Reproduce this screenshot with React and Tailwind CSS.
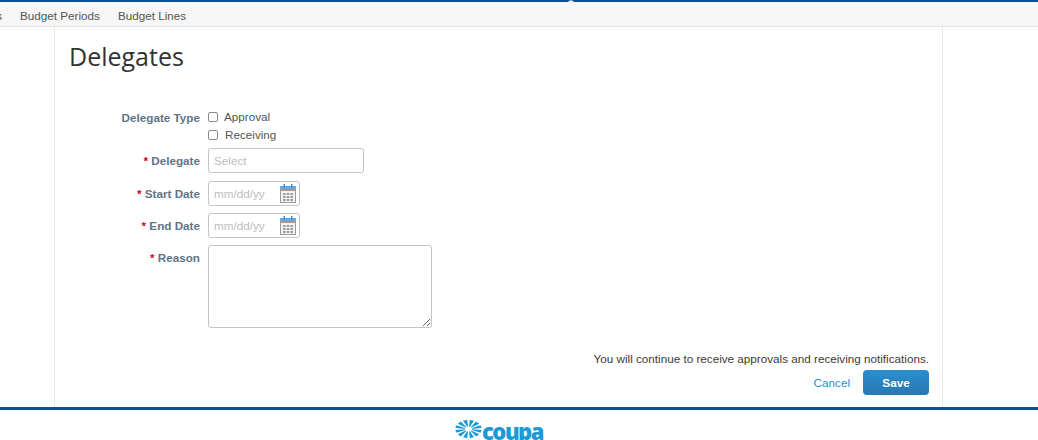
import React from "react";

const font = "font-['Liberation_Sans',Arial,sans-serif]";

const CalendarIcon = () => (
  <svg width="16" height="19" viewBox="0 0 16 19" className="block">
    <rect x="0" y="2" width="16" height="5" fill="#6aa6de" />
    <rect x="0.5" y="6.5" width="15" height="12" fill="#f4f4f4" stroke="#9c9c9c" />
    <rect x="3.5" y="0" width="1.5" height="4" fill="#7d7d7d" />
    <rect x="11" y="0" width="1.5" height="4" fill="#7d7d7d" />
    <g fill="#9a9a9a">
      <rect x="3" y="9" width="2.5" height="2" />
      <rect x="6.75" y="9" width="2.5" height="2" />
      <rect x="10.5" y="9" width="2.5" height="2" />
      <rect x="3" y="12" width="2.5" height="2" />
      <rect x="6.75" y="12" width="2.5" height="2" />
      <rect x="10.5" y="12" width="2.5" height="2" />
      <rect x="3" y="15" width="2.5" height="2" />
      <rect x="6.75" y="15" width="2.5" height="2" />
      <rect x="10.5" y="15" width="2.5" height="2" />
    </g>
  </svg>
);

const burstAngles = [0, 30, 60, 90, 120, 150, 180, 210, 240, 270, 300, 330];

const CoupaBurst = () => (
  <svg width="27" height="18" viewBox="-13.5 -9 27 18" className="block">
    <g fill="#1b9ad6" transform="scale(1.45 1)">
      {burstAngles.map((a) => (
        <polygon key={a} points="2.5,-0.3 9,-1.5 9,1.5 2.5,0.3" transform={`rotate(${a + 15})`} />
      ))}
    </g>
  </svg>
);

const Label = ({ required, children }) => (
  <div className="w-[131px] shrink-0 text-right text-[11.7px] font-bold leading-[14px] text-[#5f7488]">
    {required && <span className="text-[#d0021b]">* </span>}
    {children}
  </div>
);

const DateField = ({ label }) => (
  <div className="flex items-start gap-2">
    <div className="pt-[6px]">
      <Label required>{label}</Label>
    </div>
    <div className="flex h-[25px] w-[92px] items-center justify-between rounded-[3px] border border-[#c4c4c4] pl-[5px] pr-[3px]">
      <span className="text-[11.7px] text-[#bdbdbd]">mm/dd/yy</span>
      <CalendarIcon />
    </div>
  </div>
);

export default function App() {
  return (
    <div className={`${font} h-[440px] w-[1038px] overflow-hidden bg-white`}>
      <div className="relative h-[27px] border-b border-[#e4e4e4] bg-[#f6f6f6]">
        <div className="h-[2px] bg-[#04558f]" />
        <div className="absolute left-[566px] top-0 h-[3px] w-[10px] bg-[#f6f6f6] [clip-path:polygon(50%_0,100%_100%,0_100%)]" />
        <div className="flex items-center pt-[7px] text-[11.7px] leading-[14px] text-[#555555]">
          <span className="w-[20px]">
            <span className="-ml-[5px] block w-[7px] overflow-hidden text-right">s</span>
          </span>
          <span>Budget Periods</span>
          <span className="ml-[18px]">Budget Lines</span>
        </div>
      </div>

      <div className="ml-[54px] h-[380px] w-[889px] border-x border-[#e8e8e8] pl-[14px] pr-[13px]">
        <h1 className="pt-[13px] font-['Open_Sans',sans-serif] text-[25px] leading-[32px] text-[#333333]">
          Delegates
        </h1>

        <div className="mt-[38px] flex flex-col">
          <div className="flex items-start gap-2">
            <div className="pt-[1px]">
              <Label>Delegate Type</Label>
            </div>
            <div className="flex flex-col gap-[4px] text-[11.7px] leading-[14px] text-[#555555]">
              <label className="flex h-[14px] items-center gap-[6px]">
                <input type="checkbox" className="m-0 h-[10px] w-[10px] appearance-none rounded-[2px] border border-[#8a8a8a]" />
                Approval
              </label>
              <label className="flex h-[14px] items-center gap-[7px]">
                <input type="checkbox" className="m-0 h-[10px] w-[10px] appearance-none rounded-[2px] border border-[#8a8a8a]" />
                Receiving
              </label>
            </div>
          </div>

          <div className="mt-[6px] flex items-start gap-2">
            <div className="pt-[6px]">
              <Label required>Delegate</Label>
            </div>
            <input
              placeholder="Select"
              className="h-[25px] w-[156px] rounded-[3px] border border-[#c4c4c4] px-[5px] text-[11.7px] placeholder:text-[#bdbdbd]"
            />
          </div>

          <div className="mt-[8px]">
            <DateField label="Start Date" />
          </div>
          <div className="mt-[7px]">
            <DateField label="End Date" />
          </div>

          <div className="mt-[7px] flex items-start gap-2">
            <div className="pt-[6px]">
              <Label required>Reason</Label>
            </div>
            <textarea className="block h-[83px] w-[224px] rounded-[3px] border border-[#c4c4c4]" />
          </div>
        </div>

        <div className="mt-[24px] flex flex-col items-end">
          <p className="text-[11.7px] leading-[14px] text-[#3b3b3b]">
            You will continue to receive approvals and receiving notifications.
          </p>
          <div className="mt-[4px] flex items-center gap-[13px]">
            <span className="text-[11.7px] text-[#1b8fd6]">Cancel</span>
            <button className="h-[25px] w-[66px] rounded-[4px] bg-gradient-to-b from-[#2a8fd0] to-[#2878b0] text-[11.7px] font-bold text-white">
              Save
            </button>
          </div>
        </div>
      </div>

      <div className="h-[3px] bg-[#04558f]" />
      <div className="ml-[455px] flex items-start pt-[10px]">
        <CoupaBurst />
        <span className="-mt-[3px] font-['Open_Sans',sans-serif] text-[22px] font-extrabold leading-[28px] tracking-[-1.5px] text-[#1b9ad6]">
          coupa
        </span>
      </div>
    </div>
  );
}
